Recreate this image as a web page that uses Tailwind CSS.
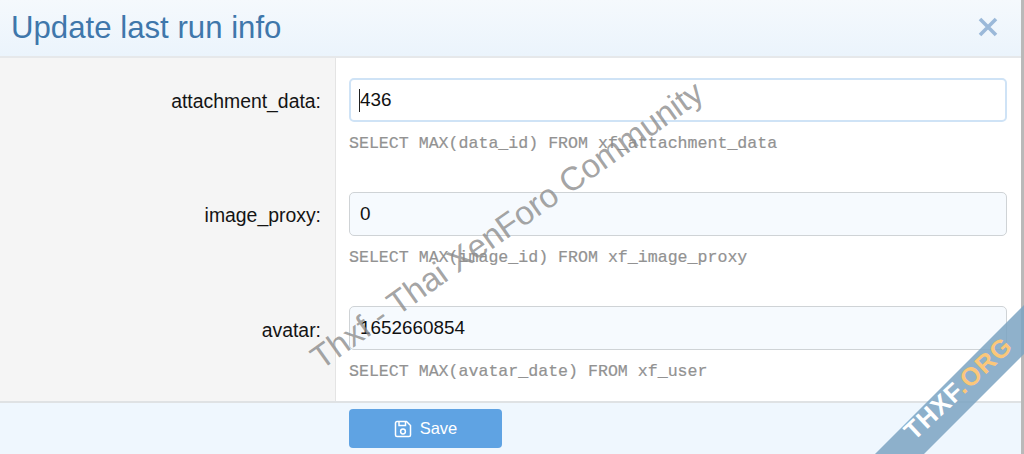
<!DOCTYPE html>
<html lang="en">

<head>
    <meta charset="UTF-8">
    <title>Update last run info</title>
    <script src="https://cdn.jsdelivr.net/npm/@tailwindcss/browser@4"></script>
</head>

<body class="font-['Liberation_Sans',Arial,sans-serif]">
    <div class="relative flex w-[1024px] h-[454px] overflow-hidden bg-white">
        <!-- dialog -->
        <div class="flex flex-col flex-1 min-w-0">
            <div class="flex items-center justify-between h-[58px] shrink-0 pl-[11px] pr-[23px] border-b-2 border-[#e6e8ea] bg-gradient-to-b from-[#f5f9fd] to-[#ebf4fc]">
                <h1 class="text-[31.2px] leading-none text-[#3f77ab]">Update last run info</h1>
                <svg class="w-[20px] h-[20px] mb-[2px] text-[#9bb9d9]" viewBox="0 0 20 20" fill="none" stroke="currentColor" stroke-width="3.6">
                    <path d="M2 2 L18 18 M18 2 L2 18" />
                </svg>
            </div>

            <div class="flex flex-1 min-h-0">
                <div class="w-[336px] shrink-0 bg-[#f5f5f5] border-r border-[#e4e4e4] pr-[14px] text-right text-[19.4px] text-[#141414]">
                    <div class="flex flex-col">
                        <label class="h-[114px] pt-[31px] leading-[24px]">attachment_data:</label>
                        <label class="h-[114px] pt-[31px] leading-[24px]">image_proxy:</label>
                        <label class="pt-[32px] leading-[24px]">avatar:</label>
                    </div>
                </div>
                <div class="flex-1 pl-[13px] pr-[14px] pt-[20px] flex flex-col">
                    <div class="h-[114px]">
                        <div class="relative flex items-center h-[44px] px-[9px] rounded-[5px] border-2 border-[#cfe3f6] bg-white text-[18.9px] text-[#111]">
                            <span class="absolute left-[8px] top-[9px] w-px h-[23px] bg-[#222]"></span>
                            436
                        </div>
                        <p class="mt-[12px] font-['Liberation_Mono',monospace] text-[16.6px] leading-[20px] text-[#929292] [-webkit-text-stroke:0.2px_#929292]">SELECT MAX(data_id) FROM xf_attachment_data</p>
                    </div>
                    <div class="h-[114px]">
                        <div class="flex items-center h-[44px] px-[10px] rounded-[5px] border border-[#cfd3d6] bg-[#f6fafe] text-[18.9px] text-[#111]">0</div>
                        <p class="mt-[12px] font-['Liberation_Mono',monospace] text-[16.6px] leading-[20px] text-[#929292] [-webkit-text-stroke:0.2px_#929292]">SELECT MAX(image_id) FROM xf_image_proxy</p>
                    </div>
                    <div>
                        <div class="flex items-center h-[44px] px-[10px] rounded-[5px] border border-[#cfd3d6] bg-[#f6fafe] text-[18.9px] text-[#111]">1652660854</div>
                        <p class="mt-[12px] font-['Liberation_Mono',monospace] text-[16.6px] leading-[20px] text-[#929292] [-webkit-text-stroke:0.2px_#929292]">SELECT MAX(avatar_date) FROM xf_user</p>
                    </div>
                </div>
            </div>

            <div class="h-[53px] shrink-0 pl-[349px] pt-[6px] border-t-2 border-[#dfe2e4] bg-[#eff7fe]">
                <button class="flex items-center justify-center gap-[8px] w-[153px] h-[39px] rounded-[4px] bg-[#5fa3e3] text-[16.5px] text-white">
                    <svg class="w-[18px] h-[18px]" viewBox="0 0 18 18" fill="none" stroke="currentColor" stroke-width="1.5">
                        <path d="M3 1.5 H12.5 L16.5 5.5 V15 A1.5 1.5 0 0 1 15 16.5 H3 A1.5 1.5 0 0 1 1.5 15 V3 A1.5 1.5 0 0 1 3 1.5 Z" />
                        <path d="M5 1.5 V5.5 H11.5 V1.5" />
                        <circle cx="9" cy="11.5" r="2.4" />
                    </svg>
                    Save
                </button>
            </div>
        </div>
        <div class="w-[3px] shrink-0 bg-[#b9b9b9]"></div>

        <!-- watermark -->
        <div class="absolute left-[277px] top-[223px] w-[410px] text-center origin-center -rotate-[35.3deg] text-[33.2px] leading-[40px] whitespace-nowrap text-[#8c8c8c]/80">
            Thxf - Thai XenForo Community</div>

        <!-- corner ribbon -->
        <svg class="absolute inset-0" width="1024" height="454" viewBox="0 0 1024 454">
            <polygon points="1024,305 875,454 924,454 1024,354" fill="#7ba3c2" fill-opacity="0.85" />
        </svg>
        <div class="absolute left-[878px] top-[372px] w-[160px] text-center -rotate-[43deg] text-[25.5px] leading-[32px] font-bold tracking-[1px] text-white whitespace-nowrap">THXF<span class="text-[#fbc77a]">.ORG</span></div>
    </div>
</body>

</html>
